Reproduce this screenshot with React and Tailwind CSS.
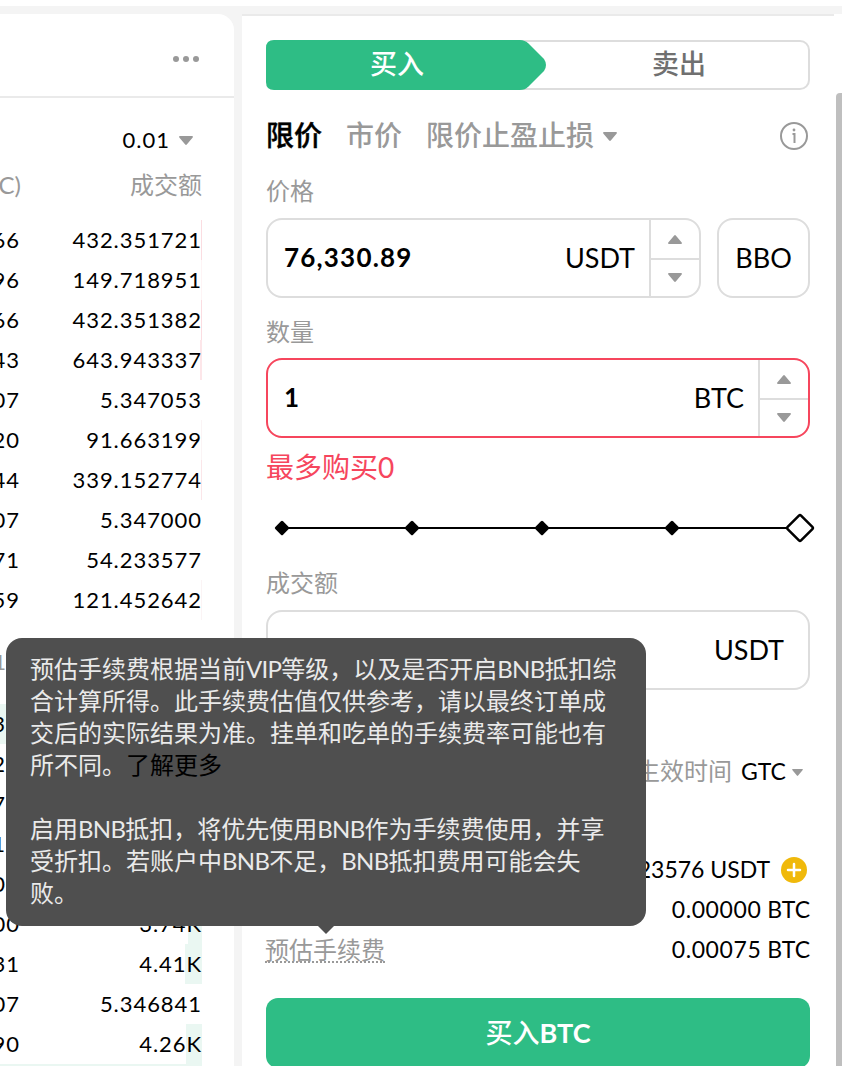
import clsx from "clsx";

const asks = [
  { amount: "66", total: "432.351721", bar: "w-px bg-[#fbdde1]" },
  { amount: "96", total: "149.718951", bar: "w-px bg-[#fef4f5]" },
  { amount: "66", total: "432.351382", bar: "w-px bg-[#fbdde1]" },
  { amount: "43", total: "643.943337", bar: "w-[2px] bg-[#fde6e9]" },
  { amount: "07", total: "5.347053" },
  { amount: "20", total: "91.663199", bar: "w-px bg-[#fbf4f5]" },
  { amount: "44", total: "339.152774", bar: "w-px bg-[#fbe6e9]" },
  { amount: "07", total: "5.347000" },
  { amount: "71", total: "54.233577" },
  { amount: "59", total: "121.452642", bar: "w-px bg-[#fbf4f5]" },
];

const bids = [
  { amount: "3", edge: true, total: "", bar: "w-full bg-[#eaf7f2]" },
  { amount: "2", edge: true, total: "" },
  { amount: "7", edge: true, total: "" },
  { amount: "1", edge: true, total: "" },
  { amount: "0", edge: true, total: "" },
  { amount: "00", total: "3.74K", bar: "w-[14px] bg-[#eaf7f2]" },
  { amount: "31", total: "4.41K", bar: "w-[17px] bg-[#eaf7f2]" },
  { amount: "07", total: "5.346841" },
  { amount: "90", total: "4.26K", bar: "w-[16px] bg-[#eaf7f2]" },
  { amount: "", total: "", bar: "w-full bg-[#eaf7f2]" },
];

function Caret({ up, small, className }) {
  return (
    <svg
      viewBox="0 0 14 9"
      className={clsx(small ? "h-[7px] w-[11px]" : "h-[9px] w-[14px]", up && "rotate-180", className)}
      fill="#999"
    >
      <path d="M1 0h12c.9 0 1.200.8.7 1.400L7.800 8.500a1.100 1.100 0 0 1-1.600 0L.3 1.400C-.2.8.1 0 1 0z" />
    </svg>
  );
}

function BookRow({ row }) {
  return (
    <div className="relative flex h-10 w-[202px] shrink-0 items-center text-[22px] tracking-[0.95px]">
      {row.bar && <div className={clsx("absolute right-0 top-0 h-full", row.bar)} />}
      <span className={clsx("relative flex shrink-0 justify-end pb-[2px]", row.edge ? "w-[6px]" : "w-[20px]")}>
        {row.amount}
      </span>
      <span className="relative ml-auto pb-[2px]">{row.total}</span>
    </div>
  );
}

function Stepper() {
  return (
    <div className="flex h-full w-[50px] flex-col border-l-2 border-[#ddd]">
      <div className="flex h-[40px] items-center justify-center border-b-2 border-[#ddd]">
        <Caret up />
      </div>
      <div className="flex flex-1 items-center justify-center">
        <Caret className="-mt-px" />
      </div>
    </div>
  );
}

function Label({ children, className }) {
  return <div className={clsx("flex h-[30px] items-center text-[24px] text-[#999]", className)}>{children}</div>;
}

function OrderBook() {
  return (
    <section className="flex h-[1052px] w-[234px] shrink-0 flex-col overflow-hidden rounded-tr-2xl bg-white">
      <header className="flex h-[84px] shrink-0 justify-end border-b-2 border-[#eaeaea] pr-[35px] pt-[42px]">
        <svg className="h-[6px] w-[26px]" viewBox="0 0 26 6" fill="#999">
          <circle cx="3" cy="3" r="3" />
          <circle cx="13" cy="3" r="3" />
          <circle cx="23" cy="3" r="3" />
        </svg>
      </header>
      <div className="mt-[22px] flex h-10 shrink-0 items-center justify-end pr-[41px]">
        <span className="pb-[2px] text-[22px] tracking-[1px]">0.01</span>
        <Caret className="ml-[9px]" />
      </div>
      <div className="mt-[6px] flex h-10 w-[202px] shrink-0 items-center justify-between pb-[2px] text-[#999]">
        <span className="flex w-[21px] justify-end text-[24px]">C)</span>
        <span className="text-[24px]">成交额</span>
      </div>
      <div className="mt-[14px]">
        {asks.map((row, i) => (
          <BookRow key={i} row={row} />
        ))}
      </div>
      <div className="flex h-[84px] w-[6px] shrink-0 items-center justify-end pb-[2px] text-[22px] text-[#999]">1</div>
      <div>
        {bids.map((row, i) => (
          <BookRow key={i} row={row} />
        ))}
      </div>
    </section>
  );
}

function SideTabs() {
  return (
    <div className="relative flex h-[50px] rounded-[10px] border-2 border-[#ddd] text-[27px] font-medium">
      <svg className="absolute -left-[2px] -top-[2px] h-[50px] w-[280px]" viewBox="0 0 280 50" fill="#2ebd85">
        <path d="M8 0H254Q259 0 262.500 3.500L278 19Q282 25 278 31L262.500 46.500Q259 50 254 50H8Q0 50 0 42V8Q0 0 8 0Z" />
      </svg>
      <span className="relative flex w-[258px] items-center justify-center pb-px text-white">买入</span>
      <span className="flex flex-1 items-center justify-center pb-px pl-[24px] text-[#707070]">卖出</span>
    </div>
  );
}

function Slider() {
  return (
    <svg className="-mr-[8px] mt-[29px] h-[32px] w-[552px]" viewBox="0 0 552 32">
      <path d="M16 16H534" stroke="#000" strokeWidth="2" />
      {[16, 146, 276, 406].map((x) => (
        <rect
          key={x}
          x={x - 5.5}
          y="10.5"
          width="11"
          height="11"
          rx="1.500"
          transform={`rotate(45 ${x} 16)`}
        />
      ))}
      <rect
        x="524.5"
        y="6.5"
        width="19"
        height="19"
        rx="1.500"
        fill="#fff"
        stroke="#000"
        strokeWidth="2.500"
        transform="rotate(45 534 16)"
      />
    </svg>
  );
}

function OrderForm() {
  return (
    <section className="h-[1052px] w-[592px] border-t-2 border-[#eaeaea] bg-white pl-6 pr-6 pt-6">
      <SideTabs />

      <div className="mt-[26px] flex h-10 items-center text-[28px] font-medium text-[#999]">
        <span className="w-[80px] pb-[2px] text-black [-webkit-text-stroke:0.4px_black]">限价</span>
        <span className="w-[80px] pb-[2px]">市价</span>
        <span className="pb-[2px]">限价止盈止损</span>
        <Caret className="ml-[9px]" />
        <svg className="ml-auto mr-[2px] h-[28px] w-[28px]" viewBox="0 0 28 28" fill="none" stroke="#999" strokeWidth="2">
          <circle cx="14" cy="14" r="13" />
          <path d="M12.500 12h2v9" />
          <circle cx="14" cy="8" r="1.400" fill="#999" stroke="none" />
        </svg>
      </div>

      <Label className="mt-5">价格</Label>
      <div className="mt-3 flex h-20 gap-4">
        <div className="flex w-[435px] items-center rounded-2xl border-2 border-[#ddd] pl-4">
          <span className="pb-px text-[26px] font-bold tracking-[1.2px]">76,330.89</span>
          <span className="ml-auto mr-[14px] text-[27px]">USDT</span>
          <Stepper />
        </div>
        <div className="flex flex-1 items-center justify-center rounded-2xl border-2 border-[#ddd] text-[27px]">BBO</div>
      </div>

      <Label className="mt-[19px]">数量</Label>
      <div className="mt-[11px] flex h-20 items-center rounded-2xl border-2 border-[#f6465d] pl-4">
        <span className="pb-px text-[26px] font-bold">1</span>
        <span className="ml-auto mr-[14px] text-[27px]">BTC</span>
        <Stepper />
      </div>
      <div className="mt-[15px] flex h-[30px] items-center pb-[2px] text-[28px] text-[#f6465d]">最多购买0</div>

      <Slider />

      <Label className="mt-6">成交额</Label>
      <div className="mt-3 flex h-20 items-center justify-end rounded-2xl border-2 border-[#ddd] pr-6 text-[27px]">
        USDT
      </div>

      <div className="mt-[67px] flex h-[30px] items-center justify-end pr-[7px]">
        <span className="pb-[2px] text-[24px] text-[#999]">生效时间</span>
        <span className="ml-[9px] pb-px text-[23px]">GTC</span>
        <Caret small className="ml-[6px]" />
      </div>

      <div className="mt-[63px] text-[23px]">
        <div className="flex h-10 items-center justify-end">
          <span className="pb-px">23576 USDT</span>
          <svg className="ml-[11px] mr-[3px] h-[26px] w-[26px]" viewBox="0 0 26 26">
            <circle cx="13" cy="13" r="13" fill="#f0b90b" />
            <path d="M13 7v12M7 13h12" stroke="#fff" strokeWidth="2.500" strokeLinecap="round" />
          </svg>
        </div>
        <div className="flex h-10 items-center justify-end pb-px">
          <span className="tracking-[0.6px]">0.00000</span>&nbsp;BTC
        </div>
        <div className="flex h-10 items-center pb-px">
          <span className="-ml-px mr-auto h-[26px] border-b-2 border-dotted border-[#999] text-[24px] leading-[25px] text-[#999]">
            预估手续费
          </span>
          <span className="tracking-[0.6px]">0.00075</span>&nbsp;BTC
        </div>
      </div>

      <button className="mt-7 flex h-[70px] w-full items-center justify-center rounded-xl bg-[#2ebd85] text-[27px] font-medium text-white">
        买入<span className="font-bold">BTC</span>
      </button>
    </section>
  );
}

function Latin({ children }) {
  return <span className="tracking-[-0.7px]">{children}</span>;
}

function FeeTooltip() {
  return (
    <div className="absolute left-[6px] top-[638px] h-[288px] w-[640px] whitespace-nowrap rounded-2xl bg-[#4f4f4f] px-6 pt-[15px] text-[24px] leading-8 text-[#eaeaea]">
      <p>
        预估手续费根据当前<Latin>VIP</Latin>等级，以及是否开启<Latin>BNB</Latin>抵扣综
        <br />
        合计算所得。此手续费估值仅供参考，请以最终订单成
        <br />
        交后的实际结果为准。挂单和吃单的手续费率可能也有
        <br />
        所不同。<span className="text-black">了解更多</span>
      </p>
      <p className="mt-8">
        启用<Latin>BNB</Latin>抵扣，将优先使用<Latin>BNB</Latin>作为手续费使用，并享
        <br />
        受折扣。若账户中<Latin>BNB</Latin>不足，<Latin>BNB</Latin>抵扣费用可能会失
        <br />
        败。
      </p>
      <svg className="absolute left-[312px] top-[288px] h-2 w-4" viewBox="0 0 16 8" fill="#4f4f4f">
        <path d="M0 0h16L8 8z" />
      </svg>
    </div>
  );
}

export default function App() {
  return (
    <div
      lang="zh-CN"
      className="relative h-[1066px] w-[842px] overflow-hidden bg-white pt-[6px] font-['Lato','Noto_Sans_CJK_SC',sans-serif] text-black"
    >
      <div className="h-2 bg-[#f4f4f4]" />
      <div className="flex bg-[linear-gradient(90deg,#f4f4f4_242px,#fff_242px)]">
        <OrderBook />
        <div className="w-2 shrink-0" />
        <OrderForm />
        <div className="ml-[2px] mt-[79px] w-[6px] shrink-0 rounded-tl bg-[#bfbfbf]" />
      </div>
      <FeeTooltip />
    </div>
  );
}
